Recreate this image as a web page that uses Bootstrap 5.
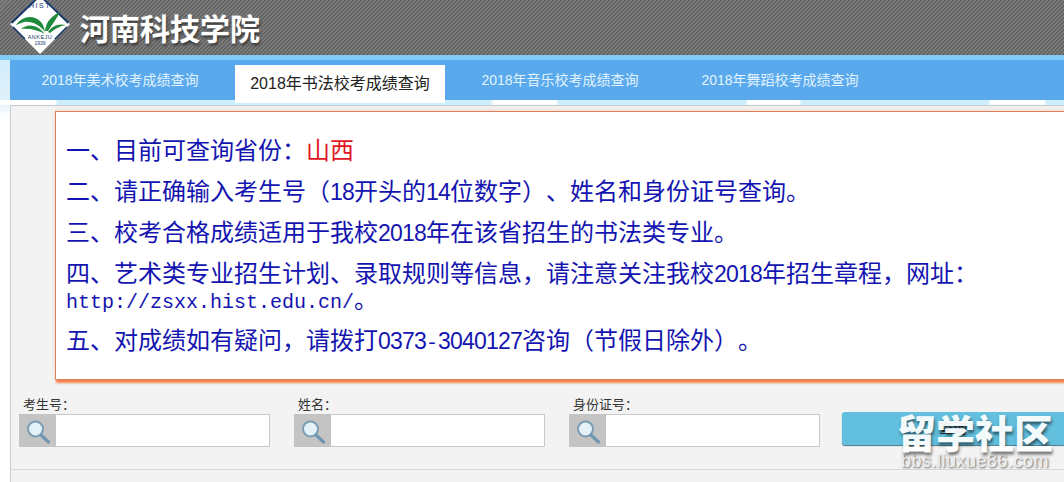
<!DOCTYPE html>
<html lang="zh-CN">
<head>
<meta charset="utf-8">
<title>河南科技学院</title>
<link rel="stylesheet" href="https://cdn.jsdelivr.net/npm/bootstrap@5.3.0/dist/css/bootstrap.min.css">
<style>
html,body{height:482px;overflow:hidden;}
body{font-family:"Liberation Sans","Noto Sans CJK SC",sans-serif;background:linear-gradient(#bfe5fa 0,#dff1fb 100px,#fff 118px);color:#222;position:relative;text-spacing-trim:space-all;font-kerning:none;}
.site-head{height:55px;background-color:#6f6f6f;background-image:repeating-linear-gradient(135deg,#656565 0,#656565 1.41px,#7b7b7b 1.41px,#7b7b7b 2.83px);overflow:hidden;gap:10px;padding-left:10px;}
.site-logo{width:60px;height:60px;margin-top:-6px;flex:none;}
.site-title{font-family:"Noto Sans CJK SC",sans-serif;font-size:30px;font-weight:700;color:#fff;line-height:55px;text-shadow:1px 2px 3px #2c2c2c,0 0 2px #bbb;}
.tab-zone{padding:5px 0 0 10px;height:50px;background:linear-gradient(#7fcbf7 0,#7fcbf7 5px,transparent 5px);}
.tab-bar{height:40px;background:#5aa9ec;}
.tab-item{width:220px;height:40px;line-height:40px;text-align:center;color:#e0f3ff;font-size:14px;text-decoration:none;display:block;}
.tab-item.tab-on{margin:5px 5px -3px;width:210px;height:38px;line-height:38px;background:#fff;color:#222;font-size:16px;position:relative;z-index:2;}
.cloud-strip{position:absolute;left:0;top:100px;width:100%;height:5px;background:linear-gradient(90deg,#fff 0,#fff 55px,#cdeefc 58px,#cdeefc 490px,#fff 494px,#fff 556px,#cdeefc 559px,#cdeefc 745px,#fff 748px,#fff 799px,#cdeefc 802px,#cdeefc 988px,#fff 991px,#fff 1044px,#cdeefc 1047px);}
.panel-main{margin-left:10px;height:377px;background:#f3f3f3;border-left:1px solid #ccc;border-top:1px solid #c3cbd2;padding:5px 0 0 44px;position:relative;}
.notice-box{height:269px;background:#fff;border:1px solid #e0805a;border-right:0;box-shadow:1px 3px 2px #f0824c,0 -2px 4px rgba(240,130,76,.15);padding:22px 0 0 10px;color:#1414b0;font-family:"Noto Sans CJK SC",sans-serif;font-size:24px;width:1010px;}
.notice-box p{margin:0 0 11px;height:30px;line-height:30px;white-space:nowrap;}
.notice-box .head-line{margin-bottom:0;height:27px;}
.notice-box .wrapline{height:27px;line-height:27px;margin-bottom:13px;}
.mono-part{font-family:"Liberation Mono",monospace;font-size:20px;line-height:1;}
.num-part{font-family:"Liberation Sans",sans-serif;font-size:23px;letter-spacing:-.79px;line-height:1;}
.red-part{color:#e0141e;}
.mid-colon{font-family:"Noto Sans CJK TC",sans-serif;line-height:1;}
.query-row{margin-left:-36px;margin-top:17px;height:51px;}
.query-cell{width:251px;margin-right:24px;flex:none;}
.query-label{font-size:13px;line-height:16px;padding-left:4px;margin:0 0 1px;display:block;color:#333;}
.query-icon{width:37px;height:33px;background:#c4c4c4;flex:none;}
.query-input{height:33px;border:1px solid #c8c8c8;border-left:0;border-radius:0;background:#fff;box-shadow:none;padding:0 6px;}
.query-btn{width:230px;height:33px;background:#62bfdd;border:0;border-radius:3px 0 0 3px;margin-top:15px;margin-left:-2px;font-size:14px;color:#333;padding:0;box-shadow:0 1px 1px #45778a;}
.foot-line{margin:21px 0 0 -44px;border-top:1px solid #d9d9d9;height:1px;}
.wm{position:absolute;left:886px;top:409px;width:178px;color:#fff;text-align:center;pointer-events:none;font-family:"Noto Sans CJK SC",sans-serif;}
.wm-big{font-size:39px;line-height:44px;font-weight:900;text-shadow:1px 3px 3px rgba(0,0,0,.55);opacity:.92;}
.wm-small{font-family:"Liberation Sans",sans-serif;font-size:18px;line-height:16px;color:#f1f1f1;text-shadow:1px 1px 2px rgba(0,0,0,.6);letter-spacing:.5px;}
</style>
</head>
<body>
<header class="site-head d-flex align-items-start">
  <svg class="site-logo" viewBox="0 0 60 60" aria-hidden="true">
    <polygon points="30,0 60,30 30,60 0,30" fill="#fff"/>
    <polyline points="1.5,29 30,1.5 58.5,29" fill="none" stroke="#17386a" stroke-width="2"/>
    <path d="M3 33L15 45M45 45L57 33" fill="none" stroke="#17386a" stroke-width="1.6"/>
    <path d="M6 31C12 23 22 20 30 27C33 30 34 33 35 38C30 31 22 27 14 28Z" fill="#1f8a3c"/>
    <path d="M11 35C17 30 26 30 33 38L35 40C28 36 19 34 11 35Z" fill="#1f8a3c"/>
    <path d="M35 37C36 28 41 22 50 18C47 24 42 31 38 37Z" fill="#1f8a3c"/>
    <path d="M38 38C42 32 48 29 56 31C50 32 44 35 40 39Z" fill="#1f8a3c"/>
    <text x="30" y="14" text-anchor="middle" font-size="7" fill="#17386a" font-family="Liberation Sans" letter-spacing="1.5">HIST</text>
    <text x="30" y="45" text-anchor="middle" font-size="5.5" fill="#17386a" font-family="Liberation Sans" letter-spacing=".5">ANKEJU</text>
    <text x="30" y="51" text-anchor="middle" font-size="5" fill="#17386a" font-family="Liberation Sans">1939</text>
  </svg>
  <div class="site-title">河南科技学院</div>
</header>
<div class="tab-zone">
  <nav class="tab-bar d-flex">
    <a class="tab-item" href="#">2018年美术校考成绩查询</a>
    <div><a class="tab-item tab-on" href="#">2018年书法校考成绩查询</a></div>
    <a class="tab-item" href="#">2018年音乐校考成绩查询</a>
    <a class="tab-item" href="#">2018年舞蹈校考成绩查询</a>
  </nav>
</div>
<main class="panel-main">
  <section class="notice-box">
    <p>一、目前可查询省份<span class="mid-colon">：</span><span class="red-part">山西</span></p>
    <p>二、请正确输入考生号（<span class="num-part">18</span>开头的<span class="num-part">14</span>位数字）、姓名和身份证号查询。</p>
    <p>三、校考合格成绩适用于我校<span class="num-part">2018</span>年在该省招生的书法类专业。</p>
    <p class="head-line">四、艺术类专业招生计划、录取规则等信息，请注意关注我校<span class="num-part">2018</span>年招生章程，网址<span class="mid-colon">：</span></p>
    <p class="wrapline"><span class="mono-part">http://zsxx.hist.edu.cn/</span>。</p>
    <p>五、对成绩如有疑问，请拨打<span class="num-part">0373</span><span class="mono-part">-</span><span class="num-part">3040127</span>咨询（节假日除外）。</p>
  </section>
  <form class="query-row d-flex align-items-start">
    <div class="query-cell">
      <label class="query-label">考生号<span class="mid-colon">：</span></label>
      <div class="d-flex">
        <span class="query-icon d-flex align-items-center justify-content-center"><svg width="28" height="28" viewBox="0 0 28 28"><circle cx="11.5" cy="12" r="7.5" fill="#e4f1f8" stroke="#7b9cb4" stroke-width="2"/><path d="M17 18l7.5 7" stroke="#6f97b4" stroke-width="3.2" stroke-linecap="round"/></svg></span>
        <input class="form-control query-input" type="text">
      </div>
    </div>
    <div class="query-cell">
      <label class="query-label">姓名<span class="mid-colon">：</span></label>
      <div class="d-flex">
        <span class="query-icon d-flex align-items-center justify-content-center"><svg width="28" height="28" viewBox="0 0 28 28"><circle cx="11.5" cy="12" r="7.5" fill="#e4f1f8" stroke="#7b9cb4" stroke-width="2"/><path d="M17 18l7.5 7" stroke="#6f97b4" stroke-width="3.2" stroke-linecap="round"/></svg></span>
        <input class="form-control query-input" type="text">
      </div>
    </div>
    <div class="query-cell">
      <label class="query-label">身份证号<span class="mid-colon">：</span></label>
      <div class="d-flex">
        <span class="query-icon d-flex align-items-center justify-content-center"><svg width="28" height="28" viewBox="0 0 28 28"><circle cx="11.5" cy="12" r="7.5" fill="#e4f1f8" stroke="#7b9cb4" stroke-width="2"/><path d="M17 18l7.5 7" stroke="#6f97b4" stroke-width="3.2" stroke-linecap="round"/></svg></span>
        <input class="form-control query-input" type="text">
      </div>
    </div>
    <button class="btn query-btn" type="button">查询</button>
  </form>
  <div class="foot-line"></div>
</main>
<div class="cloud-strip"></div>
<div class="wm"><div class="wm-big">留学社区</div><div class="wm-small">bbs.liuxue86.com</div></div>
<script src="https://cdn.jsdelivr.net/npm/bootstrap@5.3.0/dist/js/bootstrap.bundle.min.js"></script>
</body>
</html>
